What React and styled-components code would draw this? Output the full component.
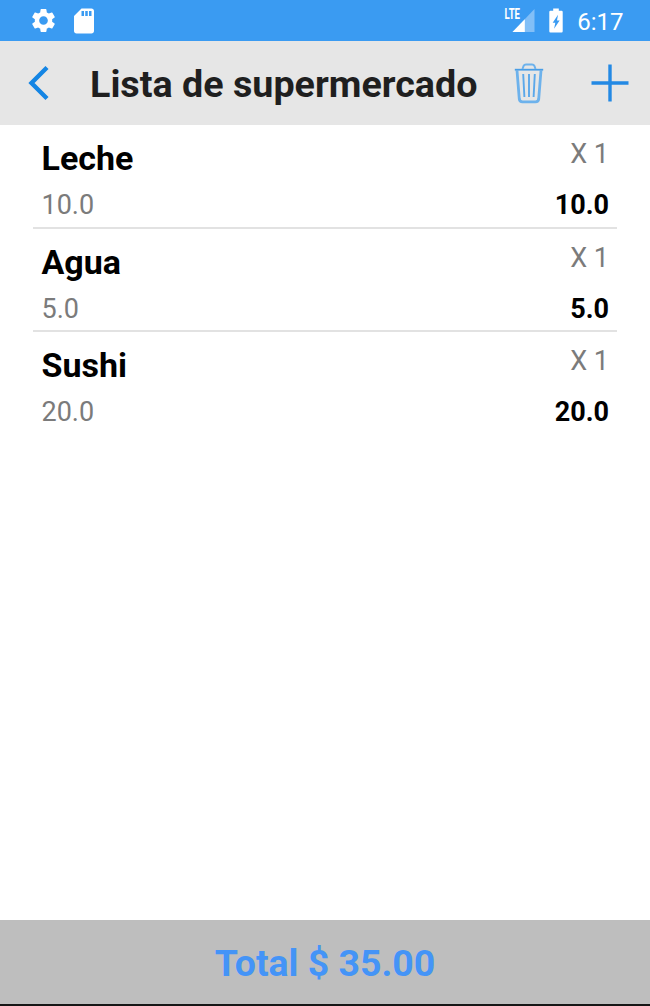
import React from "react";
import styled, { createGlobalStyle } from "styled-components";
import { MdSettings, MdSdCard } from "react-icons/md";

const items = [
  { name: "Leche", quantity: 1, price: 10 },
  { name: "Agua", quantity: 1, price: 5 },
  { name: "Sushi", quantity: 1, price: 20 },
];

const SignalIcon = () => (
  <svg width="31" height="33" viewBox="0 -4 31 33">
    <path d="M8.5 24 L30.5 1 V24 Z" fill="#82bff7" />
    <path d="M8.5 24 L20.8 11.2 V24 Z" fill="#fff" />
    <path d="M0 0 H16.8 V13 H0 Z" fill="#3a9bf2" />
    <text
      x="0.5"
      y="10.8"
      fill="#fff"
      fontSize="14"
      fontWeight="700"
      textLength="15.5"
      lengthAdjust="spacingAndGlyphs"
    >
      LTE
    </text>
  </svg>
);

const BatteryIcon = () => (
  <svg width="14" height="25" viewBox="0 0 14 25">
    <path
      d="M4.2 0.5 H9.8 V2.8 H12.6 Q13.7 2.8 13.7 4 V23.2 Q13.7 24.4 12.6 24.4 H1.4 Q0.3 24.4 0.3 23.2 V4 Q0.3 2.8 1.4 2.8 H4.2 Z"
      fill="#fff"
    />
    <path d="M9 6.8 L3.7 14.8 H6.3 L5.1 20.8 L10.6 12.4 H8 Z" fill="#3a9bf2" />
  </svg>
);

const BackIcon = () => (
  <svg width="22" height="36" viewBox="0 0 22 36" fill="none">
    <path d="M20 2.5 L4.5 18 L20 33.5" stroke="#1485e4" strokeWidth="4.4" />
  </svg>
);

const TrashIcon = () => (
  <svg width="30" height="41" viewBox="0 0 30 41" fill="none" stroke="#6db2ec">
    <path d="M3 7.5 L5.3 36 Q5.6 38.8 8.6 38.8 H21.4 Q24.4 38.8 24.7 36 L27 7.5" strokeWidth="2.8" />
    <path d="M0.8 6.7 H29.2" stroke="#489de6" strokeWidth="1.8" />
    <path d="M8.5 6 L9.6 2.8 Q10.2 1.5 12 1.5 H18 Q19.8 1.5 20.4 2.8 L21.5 6" strokeWidth="2" />
    <path d="M9.2 11 L10.4 34 M15 11 V34 M20.8 11 L19.6 34" stroke="#5ba8ea" strokeWidth="1.9" />
  </svg>
);

const PlusIcon = () => (
  <svg width="38" height="38" viewBox="0 0 38 38" fill="none">
    <path d="M19 0.5 V37.5 M0.5 19 H37.5" stroke="#2389e4" strokeWidth="3.4" />
  </svg>
);

const Item = ({ item }) => (
  <Row>
    <Column>
      <Name>{item.name}</Name>
      <Price>{item.price.toFixed(1)}</Price>
    </Column>
    <Column $right>
      <Quantity>X {item.quantity}</Quantity>
      <Subtotal>{(item.price * item.quantity).toFixed(1)}</Subtotal>
    </Column>
  </Row>
);

const App = () => {
  const total = items.reduce((sum, item) => sum + item.price * item.quantity, 0);

  return (
    <Screen>
      <GlobalStyle />
      <StatusBar>
        <StatusIcons>
          <MdSettings size={29} />
          <MdSdCard size={30} />
        </StatusIcons>
        <StatusInfo>
          <SignalIcon />
          <BatteryIcon />
          <Clock>6:17</Clock>
        </StatusInfo>
      </StatusBar>
      <Header>
        <IconButton aria-label="Regresar">
          <BackIcon />
        </IconButton>
        <Title>Lista de supermercado</Title>
        <Actions>
          <IconButton aria-label="Eliminar">
            <TrashIcon />
          </IconButton>
          <IconButton aria-label="Agregar">
            <PlusIcon />
          </IconButton>
        </Actions>
      </Header>
      <List>
        {items.map((item) => (
          <Item item={item} key={item.name} />
        ))}
      </List>
      <Footer>Total $ {total.toFixed(2)}</Footer>
    </Screen>
  );
};

const GlobalStyle = createGlobalStyle`
  * {
    box-sizing: border-box;
  }

  body {
    margin: 0;
    background: #fff;
    font-family: Roboto, sans-serif;
  }

  svg {
    display: block;
    flex-shrink: 0;
  }
`;

const Screen = styled.div`
  display: flex;
  flex-direction: column;
  height: 1006px;
  overflow: hidden;
`;

const StatusBar = styled.div`
  display: flex;
  justify-content: space-between;
  align-items: center;
  height: 41px;
  padding: 0 26.5px 0 28.5px;
  background: #3a9bf2;
  color: #fff;
`;

const StatusIcons = styled.div`
  display: flex;
  align-items: center;
  gap: 11px;
`;

const StatusInfo = styled.div`
  display: flex;
  align-items: center;
  gap: 14px;
`;

const Clock = styled.span`
  padding-top: 2px;
  font-size: 24px;
  line-height: 28px;
`;

const Header = styled.header`
  display: flex;
  align-items: center;
  height: 84px;
  padding: 0 21px 0 27px;
  background: #e6e6e6;
`;

const IconButton = styled.button`
  display: flex;
  padding: 0;
  border: none;
  background: none;
`;

const Title = styled.h1`
  margin: 0 0 0 41px;
  padding-top: 2px;
  color: #1f1f1f;
  font-size: 37.7px;
  font-weight: 700;
  line-height: 42px;
  white-space: nowrap;
`;

const Actions = styled.div`
  display: flex;
  align-items: center;
  gap: 47px;
  margin-left: auto;
`;

const List = styled.ul`
  flex: 1;
  margin: 0;
  padding: 0 33px;
  list-style: none;
`;

const Row = styled.li`
  display: flex;
  justify-content: space-between;
  height: 103.7px;
  padding: 13px 8px 0 8.5px;
  border-bottom: 2px solid #e2e2e2;

  &:last-child {
    border-bottom: none;
  }
`;

const Column = styled.div`
  display: flex;
  flex-direction: column;
  align-items: ${({ $right }) => ($right ? "flex-end" : "flex-start")};
`;

const Name = styled.span`
  margin-bottom: 11px;
  color: #000;
  font-size: 34px;
  font-weight: 700;
  line-height: 40px;
`;

const Price = styled.span`
  color: #7b7b7b;
  font-size: 27px;
  line-height: 32px;
`;

const Quantity = styled.span`
  margin-bottom: 19px;
  color: #7b7b7b;
  font-size: 27px;
  line-height: 32px;
`;

const Subtotal = styled.span`
  color: #000;
  font-size: 27px;
  font-weight: 700;
  line-height: 32px;
`;

const Footer = styled.footer`
  display: flex;
  justify-content: center;
  align-items: center;
  height: 86px;
  padding-top: 2px;
  border-bottom: 2px solid #161616;
  background: #bebebe;
  color: #4494f7;
  font-size: 37.4px;
  font-weight: 700;
  line-height: 44px;
`;

export default App;
